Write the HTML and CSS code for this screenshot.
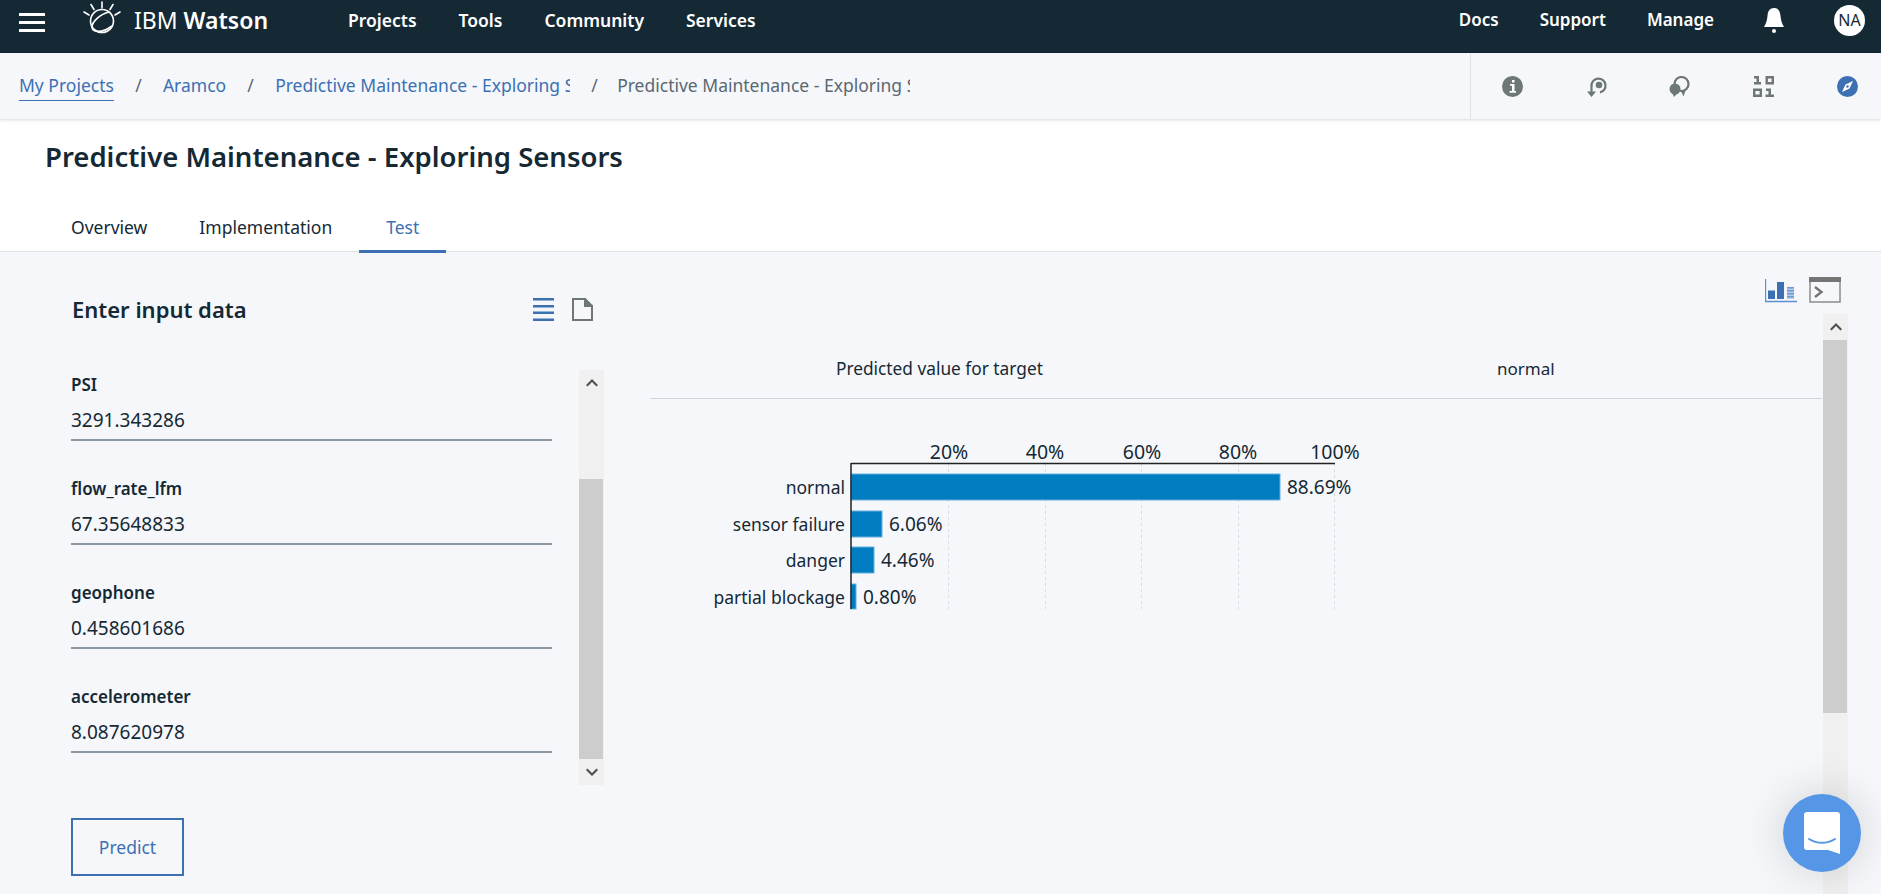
FILE: index.html
```html
<!DOCTYPE html>
<html lang="en">
  <head>
    <meta charset="UTF-8" />
    <title>Predictive Maintenance - Exploring Sensors</title>
    <link rel="stylesheet" href="styles.css">
  </head>
  <body>
    <header class="topbar">
      <div class="hamburger"><span></span><span></span><span></span></div>
      <svg class="logo" width="38" height="34" viewBox="0 0 38 34" fill="none" stroke="#fff" stroke-width="1.6">
        <path d="M19 1v6M8 3.500l3 5M30 3.500l-3 5M1 11l5 3M37 11l-5 3" stroke-linecap="round" />
        <circle cx="19" cy="20" r="11.500" />
        <path d="M26 11C17 13 9 21 9 26c0 5 9 7 20-1" />
      </svg>
      <div class="brand">IBM <b>Watson</b></div>
      <nav class="main-nav">
        <a>Projects</a>
        <a>Tools</a>
        <a>Community</a>
        <a>Services</a>
      </nav>
      <nav class="side-nav">
        <a>Docs</a>
        <a>Support</a>
        <a>Manage</a>
      </nav>
      <svg class="bell" width="20" height="25" viewBox="0 0 20 25" fill="#fff">
        <path d="M10 0c4 0 6 3 6.400 7 .4 4 1 8 3.600 12H0c2.600-4 3.200-8 3.600-12C4 3 6 0 10 0z" />
        <circle cx="10" cy="23" r="2" />
      </svg>
      <div class="avatar">NA</div>
    </header>

    <div class="subnav">
      <div class="crumbs">
        <a class="crumb crumb-first">My Projects</a>
        <span class="sep">/</span>
        <a class="crumb">Aramco</a>
        <span class="sep">/</span>
        <a class="crumb crumb-cut">Predictive Maintenance - Exploring Sensors</a>
        <span class="sep">/</span>
        <span class="crumb crumb-cut crumb-current">Predictive Maintenance - Exploring Sensors</span>
      </div>
      <div class="tools">
        <svg width="21" height="21" viewBox="0 0 21 21">
          <circle cx="10.500" cy="10.500" r="10.500" fill="#6d7777" />
          <path d="M8 8h4.500v7H14v1.800H7.500V15H10V9.800H8zM10 4h2.500v2.500H10z" fill="#fff" />
        </svg>
        <svg width="21" height="21" viewBox="0 0 21 21" fill="#6d7777">
          <path d="M14 16.400A7 7 0 1 0 5.500 9.500" fill="none" stroke="#6d7777" stroke-width="2.200" />
          <path d="M4.400 9h2.200v6.500H10L5.500 21 1 15.500h3.400z" />
          <circle cx="13" cy="9" r="3.300" />
        </svg>
        <svg width="21" height="21" viewBox="0 0 21 21" fill="#6d7777">
          <circle cx="12.500" cy="8" r="7" fill="none" stroke="#6d7777" stroke-width="2.200" />
          <path d="M12 15l4.500-.5-2 6z" />
          <circle cx="6" cy="13" r="5.500" />
          <path d="M3.500 17h5L5 21z" />
        </svg>
        <svg width="21" height="21" viewBox="0 0 21 21" fill="#6d7777">
          <path d="M1 0h5v6h2v2.400H1V6h2.500V2.400H1zM0 12.500h9v8.500H0zm2.400 2.400v3.700h4.200v-3.700zM12.500 0H21v8.400h-8.500zm2.400 2.400v3.600h3.700V2.400zM13 12.500h5v6h3V21h-8.500v-2.500h3v-3.600H13z" />
        </svg>
        <svg width="21" height="21" viewBox="0 0 21 21">
          <circle cx="10.500" cy="10.500" r="10.500" fill="#3d70b2" />
          <path d="M16 5l-3.500 7.500-7.500 3.500 3.500-7.500z" fill="#fff" />
          <circle cx="10.500" cy="10.500" r="1.200" fill="#3d70b2" />
        </svg>
      </div>
    </div>

    <section class="page-head">
      <h1>Predictive Maintenance - Exploring Sensors</h1>
      <div class="tabs">
        <a class="tab">Overview</a>
        <a class="tab">Implementation</a>
        <a class="tab tab-active">Test</a>
      </div>
    </section>

    <main class="content">
      <section class="input-panel">
        <div class="input-head">
          <h2>Enter input data</h2>
          <svg width="21" height="23" viewBox="0 0 21 23" fill="#3d70b2">
            <path d="M0 0h21v2.500H0zM0 7h21v2.500H0zM0 13.500h21V16H0zM0 20.500h21V23H0z" />
          </svg>
          <svg class="doc-icon" width="21" height="23" viewBox="0 0 21 23" fill="none" stroke="#6d7777" stroke-width="2">
            <path d="M1 1h12v7h7v14H1z" />
            <path d="M13 1l7 7h-7z" fill="#6d7777" />
          </svg>
        </div>
        <div class="field-scroll">
          <div class="fields">
            <div class="field">
              <label>PSI</label>
              <div class="field-value">3291.343286</div>
            </div>
            <div class="field">
              <label>flow_rate_lfm</label>
              <div class="field-value">67.35648833</div>
            </div>
            <div class="field">
              <label>geophone</label>
              <div class="field-value">0.458601686</div>
            </div>
            <div class="field">
              <label>accelerometer</label>
              <div class="field-value">8.087620978</div>
            </div>
          </div>
          <div class="scrollbar">
            <div class="scroll-btn">
              <svg width="12" height="8" viewBox="0 0 12 8"><path d="M6 0l6 6-1.500 1.500L6 3 1.500 7.500 0 6z" fill="#505050" /></svg>
            </div>
            <div class="scroll-track scroll-track-input"><div class="scroll-thumb"></div></div>
            <div class="scroll-btn">
              <svg width="12" height="8" viewBox="0 0 12 8"><path d="M6 8L0 2 1.500.5 6 5 10.500.5 12 2z" fill="#505050" /></svg>
            </div>
          </div>
        </div>
        <button class="predict" type="button">Predict</button>
      </section>

      <section class="result-panel">
        <div class="result-tools">
          <svg width="32" height="24" viewBox="0 0 32 24">
            <path d="M.5 0v22.500H32" fill="none" stroke="#5b8fd0" stroke-width="1.400" />
            <path d="M3 11.500h7V20H3zM12 3h7v17h-7z" fill="#3d70b2" />
            <path d="M22 8h7v12h-7z" fill="#b5cbe8" />
            <path d="M22 8h7v1.500h-7zM22 11h7v1.500h-7zM22 14h7v1.500h-7zM22 17h7v1.500h-7z" fill="#6f9bd3" />
          </svg>
          <svg width="32" height="26" viewBox="0 0 32 26">
            <rect x="1" y="1" width="30" height="24" fill="none" stroke="#8c8c8c" stroke-width="1.500" />
            <path d="M0 0h32v5H0z" fill="#757575" />
            <path d="M6 10l6.500 5-6.500 5" fill="none" stroke="#757575" stroke-width="2.400" />
          </svg>
        </div>
        <div class="result-body">
          <div class="result-main">
            <div class="result-row">
              <span class="result-key">Predicted value for target</span>
              <span class="result-val">normal</span>
            </div>
            <svg class="chart" width="720" height="190" viewBox="0 0 720 190">
              <g class="grid">
                <path d="M298.500 33v146M395.500 33v146M491.500 33v146M588.500 33v146M684.500 33v146" />
              </g>
              <g class="ticks">
                <text x="299" y="29">20%</text>
                <text x="395" y="29">40%</text>
                <text x="492" y="29">60%</text>
                <text x="588" y="29">80%</text>
                <text x="685" y="29">100%</text>
              </g>
              <g class="bars">
                <rect x="201" y="44" width="429" height="26" />
                <rect x="201" y="81" width="31" height="26" />
                <rect x="201" y="117" width="23" height="26" />
                <rect x="201" y="154" width="5" height="25" />
              </g>
              <path class="axis" d="M201 33.500h484M201 33v146" />
              <g class="cat">
                <text x="195" y="64">normal</text>
                <text x="195" y="101">sensor failure</text>
                <text x="195" y="137">danger</text>
                <text x="195" y="174">partial blockage</text>
              </g>
              <g class="val">
                <text x="637" y="64">88.69%</text>
                <text x="239" y="101">6.06%</text>
                <text x="231" y="137">4.46%</text>
                <text x="213" y="174">0.80%</text>
              </g>
            </svg>
          </div>
          <div class="scrollbar scrollbar-page">
            <div class="scroll-btn">
              <svg width="12" height="8" viewBox="0 0 12 8"><path d="M6 0l6 6-1.500 1.500L6 3 1.500 7.500 0 6z" fill="#505050" /></svg>
            </div>
            <div class="scroll-track"><div class="scroll-thumb scroll-thumb-page"></div></div>
          </div>
        </div>
      </section>
    </main>

    <div class="chat">
      <svg width="38" height="43" viewBox="0 0 38 43">
        <path d="M4 0h30a3 3 0 0 1 3 3v39l-12-4H4a3 3 0 0 1-3-3V3a3 3 0 0 1 3-3z" fill="#fff" />
        <path d="M6 27c8 5 18 5 26 0" fill="none" stroke="#5596e6" stroke-width="2" stroke-linecap="round" />
      </svg>
    </div>
  </body>
</html>
```

FILE: styles.css
```css
* {
  box-sizing: border-box;
}

html,
body {
  margin: 0;
  height: 894px;
  overflow: hidden;
}

body {
  font-family: "Noto Sans", Roboto, sans-serif;
  background: #f5f7fa;
  color: #152935;
  font-size: 17.500px;
  position: relative;
}

/* top bar */
.topbar {
  display: flex;
  align-items: center;
  height: 53px;
  background: #152935;
  color: #fff;
  padding-left: 19px;
}

.hamburger {
  width: 26px;
  display: flex;
  flex-direction: column;
  gap: 5px;
  margin-bottom: 9px;
}

.hamburger span {
  display: block;
  height: 3px;
  background: #fff;
}

.logo {
  margin-left: 38px;
  margin-bottom: 17px;
}

.brand {
  margin-left: 13px;
  font-size: 23px;
  margin-bottom: 13px;
  white-space: nowrap;
  width: 131px;
}

.brand b {
  font-weight: 600;
}

.main-nav,
.side-nav {
  display: flex;
  gap: 42px;
  font-weight: 600;
  margin-bottom: 14px;
}

.main-nav {
  margin-left: 83px;
}

.side-nav {
  margin-left: auto;
  gap: 41px;
  font-size: 17px;
}

.bell {
  margin-left: 50px;
  margin-bottom: 12px;
}

.avatar {
  width: 31px;
  height: 31px;
  margin-left: 50px;
  margin-right: 16px;
  margin-bottom: 13px;
  border-radius: 50%;
  background: #fff;
  color: #152935;
  font-size: 16px;
  display: flex;
  align-items: center;
  justify-content: center;
}

/* breadcrumb row */
.subnav {
  display: flex;
  height: 66px;
  background: #f5f7fa;
  box-shadow: 0 1px 3px rgba(0, 0, 0, 0.16);
  position: relative;
}

.crumbs {
  flex: 1;
  display: flex;
  align-items: center;
  padding-left: 19px;
  padding-bottom: 2px;
  color: #3d70b2;
}

.crumb {
  white-space: nowrap;
}

.crumb-first {
  padding-bottom: 3px;
  border-bottom: 1px solid #3d70b2;
  margin-top: 4px;
}

.crumb-cut {
  width: 295px;
  overflow: hidden;
}

.crumb-current {
  color: #5a6872;
  width: 293px;
  margin-left: -2px;
}

.sep {
  width: 49px;
  text-align: center;
  color: #5a6872;
}

.tools {
  width: 411px;
  border-left: 1px solid #dfe3e6;
  display: flex;
  align-items: center;
  gap: 62.700px;
  padding-left: 31px;
}

/* title and tabs */
.page-head {
  background: #fff;
  height: 133px;
  border-bottom: 1px solid #dfe3e6;
  padding-top: 20px;
}

h1 {
  margin: 0 0 0 45px;
  font-size: 27.500px;
  font-weight: 600;
  line-height: 36px;
}

.tabs {
  display: flex;
  margin: 34px 0 0 45px;
}

.tab {
  padding: 0 26px;
  height: 44px;
  line-height: 36px;
}

.tab-active {
  padding: 0 27px;
  margin-left: 1px;
  color: #3d70b2;
  border-bottom: 3px solid #3d70b2;
}

/* main area */
.content {
  display: flex;
  height: 642px;
}

.input-panel {
  width: 650px;
  padding-left: 71px;
}

.input-head {
  display: flex;
  align-items: center;
  height: 24px;
  margin-top: 45px;
  width: 522px;
}

h2 {
  margin: 0 auto 0 1px;
  font-size: 22px;
  font-weight: 600;
}

.doc-icon {
  margin-left: 18px;
}

.field-scroll {
  display: flex;
  margin-top: 49px;
  height: 415px;
}

.fields {
  width: 481px;
  margin-right: 27px;
}

.field {
  height: 104px;
  padding-top: 4px;
}

.field label {
  display: block;
  font-size: 17px;
  font-weight: 600;
  line-height: 22px;
}

.field-value {
  font-size: 19px;
  height: 45px;
  padding-top: 11px;
  border-bottom: 2px solid #8897a2;
}

.scrollbar {
  width: 25px;
  background: #f0f0f0;
  display: flex;
  flex-direction: column;
}

.scroll-btn {
  height: 26px;
  display: flex;
  align-items: center;
  justify-content: center;
  flex: none;
}

.scroll-track {
  flex: 1;
  min-height: 0;
}

.scroll-track-input {
  padding-top: 83px;
}

.scroll-thumb {
  width: 24px;
  height: 100%;
  background: #cdcdcd;
}

.scroll-thumb-page {
  height: 373px;
}

.predict {
  display: block;
  margin-top: 33px;
  width: 113px;
  height: 58px;
  background: none;
  border: 2px solid #3d70b2;
  color: #3d70b2;
  font: inherit;
}

.result-panel {
  flex: 1;
  padding-right: 33px;
}

.result-tools {
  display: flex;
  justify-content: flex-end;
  align-items: flex-end;
  gap: 12px;
  height: 51px;
  padding-top: 25px;
  margin-right: 7px;
}

.result-body {
  display: flex;
  margin-top: 11px;
  height: 580px;
}

.result-main {
  flex: 1;
}

.result-row {
  display: flex;
  height: 85px;
  border-bottom: 1px solid #d0d4da;
  padding-top: 43px;
  margin-right: 1px;
}

.result-key {
  margin-left: 186px;
  width: 661px;
  font-size: 17.300px;
}

.result-val {
  font-size: 17px;
}

.chart {
  display: block;
  margin-top: 31px;
  overflow: visible;
}

.grid path {
  stroke: #d8dce0;
  stroke-dasharray: 3 3;
  fill: none;
}

.ticks text {
  text-anchor: middle;
  font-size: 19.500px;
  fill: #152935;
}

.bars rect {
  fill: #007cc0;
  stroke: #6aaede;
  stroke-width: 1;
}

.axis {
  stroke: #222;
  stroke-width: 1.500;
  fill: none;
}

.cat text {
  text-anchor: end;
  font-size: 17.500px;
  fill: #152935;
}

.val text {
  font-size: 19px;
  fill: #152935;
}

/* chat launcher */
.chat {
  position: absolute;
  left: 1783px;
  top: 794px;
  width: 78px;
  height: 78px;
  border-radius: 50%;
  background: #5596e6;
  box-shadow: 0 0 45px rgba(0, 0, 0, 0.16);
  display: flex;
  align-items: center;
  justify-content: center;
}
```
